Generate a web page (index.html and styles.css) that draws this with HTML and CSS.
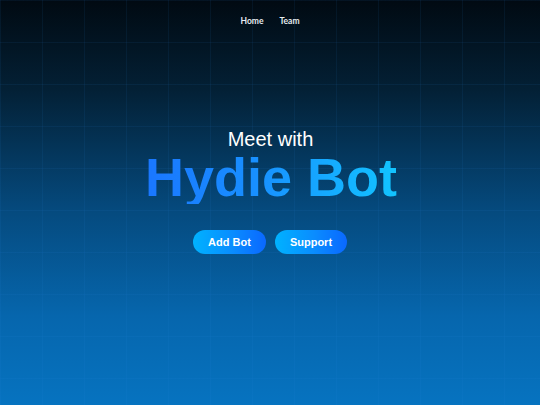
FILE: index.html
```html
<!DOCTYPE html>
<html lang="en">
<head>
<meta charset="utf-8">
<title>Hydie Bot</title>
<link rel="stylesheet" href="styles.css">
</head>
<body>
<div class="page">
  <nav class="nav">
    <a class="nav-link" href="#">Home</a>
    <a class="nav-link" href="#">Team</a>
  </nav>
  <main class="hero">
    <p class="meet">Meet with</p>
    <h1 class="title">Hydie Bot</h1>
    <div class="actions">
      <a class="btn btn-add" href="#">Add Bot</a>
      <a class="btn btn-support" href="#">Support</a>
    </div>
  </main>
</div>
</body>
</html>
```
FILE: styles.css
```css
html, body {
  margin: 0;
  padding: 0;
}
body {
  width: 540px;
  height: 405px;
  overflow: hidden;
  background: linear-gradient(180deg, #010a12 0%, #032035 22%, #054a7e 52%, #0666ad 78%, #0673c0 100%);
}
.page {
  position: relative;
  width: 540px;
  height: 405px;
  background-image:
    linear-gradient(90deg, rgba(40, 140, 230, 0.08) 1px, transparent 1px),
    linear-gradient(180deg, rgba(40, 140, 230, 0.08) 1px, transparent 1px);
  background-size: 42px 42px;
  background-position: 0 0;
  display: flex;
  flex-direction: column;
  align-items: center;
}
.nav {
  display: flex;
  gap: 16px;
  height: 42px;
  align-items: center;
}
.nav-link {
  font-family: Lato, "Liberation Sans", sans-serif;
  font-weight: 700;
  font-size: 8.5px;
  color: #e6ebf0;
  text-decoration: none;
}
.hero {
  display: flex;
  flex-direction: column;
  align-items: center;
  padding-top: 86px;
  font-family: "Liberation Sans", Arial, sans-serif;
}
.meet {
  margin: 0;
  font-size: 20px;
  line-height: 22px;
  color: #ffffff;
  padding-left: 1px;
}
.title {
  margin: 0;
  font-size: 54px;
  line-height: 54px;
  font-weight: 700;
  background: linear-gradient(90deg, #1a76ff 0%, #1890ff 45%, #12c4ff 100%);
  -webkit-background-clip: text;
  background-clip: text;
  color: transparent;
  padding-left: 2px;
}
.actions {
  display: flex;
  gap: 9px;
  margin-top: 26px;
}
.btn {
  display: flex;
  align-items: center;
  justify-content: center;
  height: 24px;
  border-radius: 12px;
  font-size: 11px;
  font-weight: 700;
  color: #ffffff;
  text-decoration: none;
  background: linear-gradient(90deg, #00b2ff 0%, #0a8cff 55%, #0a68ff 100%);
}
.btn-add {
  width: 73px;
}
.btn-support {
  width: 72px;
}
```
